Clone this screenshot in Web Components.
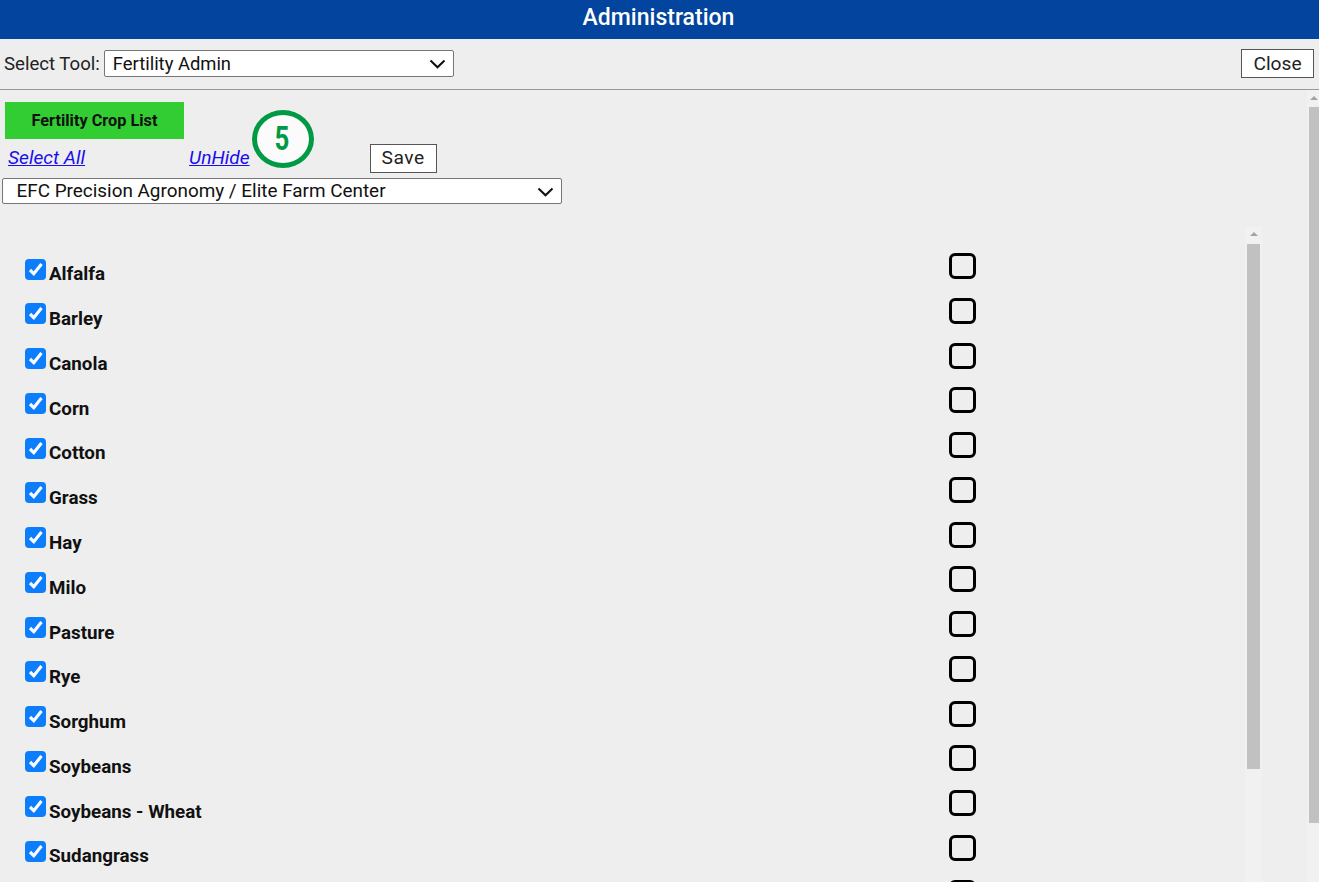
<!DOCTYPE html>
<html>
<head>
<meta charset="utf-8">
<title>Administration</title>
<style>
  html, body { margin: 0; height: 100%; overflow: hidden; }
  body { font-family: Roboto, "Liberation Sans", sans-serif; background: #eeeeee; color: #111; }
</style>
</head>
<body>
<admin-page>
  <admin-header>Administration</admin-header>
  <tool-bar>
    <span class="tool-label">Select Tool:</span>
    <select-box style="--w:350px;--h:27px;--pad:8px;--fs:18.4px;--lift:0px" value="Fertility Admin"></select-box>
    <plain-button slot="end" style="--w:73px;--h:29px">Close</plain-button>
  </tool-bar>
  <scroll-pane>
    <crop-admin></crop-admin>
  </scroll-pane>
</admin-page>

<script>
const chevron = `<svg width="17" height="10" viewBox="0 0 17 10"><path d="M1.5 1.5 8.5 8.2 15.5 1.5" fill="none" stroke="#111" stroke-width="2.1"/></svg>`;

class AdminPage extends HTMLElement {
  constructor() {
    super();
    this.attachShadow({ mode: 'open' });
  }
  connectedCallback() {
    this.shadowRoot.innerHTML = `
      <style>
        :host { display: flex; flex-direction: column; height: 882px; overflow: hidden; }
      </style>
      <slot></slot>`;
  }
}

class AdminHeader extends HTMLElement {
  constructor() {
    super();
    this.attachShadow({ mode: 'open' });
  }
  connectedCallback() {
    this.shadowRoot.innerHTML = `
      <style>
        :host {
          display: flex; flex: none; height: 39px; padding: 0 2px 4px 0; box-sizing: border-box;
          align-items: center; justify-content: center;
          background: #03449e; color: #fff;
          font-size: 23px; font-weight: 500;
        }
      </style>
      <slot></slot>`;
  }
}

class ToolBar extends HTMLElement {
  constructor() {
    super();
    this.attachShadow({ mode: 'open' });
  }
  connectedCallback() {
    this.shadowRoot.innerHTML = `
      <style>
        :host {
          display: flex; flex: none; height: 51px; box-sizing: border-box;
          align-items: center; gap: 4px;
          padding: 0 5px 2px 4px;
          border-bottom: 1px solid #999;
          font-size: 18.6px; color: #222;
        }
        .end { margin-left: auto; display: flex; }
        ::slotted(.tool-label) { margin-top: 2px; }
      </style>
      <slot></slot>
      <div class="end"><slot name="end"></slot></div>`;
  }
}

class SelectBox extends HTMLElement {
  constructor() {
    super();
    this.attachShadow({ mode: 'open' });
  }
  connectedCallback() {
    this.shadowRoot.innerHTML = `
      <style>
        :host {
          display: flex; align-items: center; justify-content: space-between; flex: none;
          box-sizing: border-box; width: var(--w); height: var(--h);
          padding: 0 7px 0 var(--pad);
          background: #fff; border: 1px solid #767676; border-radius: 2px;
          font-size: var(--fs); color: #111;
        }
        span { margin-bottom: var(--lift); }
        svg { display: block; margin-top: 1px; }
      </style>
      <span>${this.getAttribute('value')}</span>${chevron}`;
  }
}

class PlainButton extends HTMLElement {
  constructor() {
    super();
    this.attachShadow({ mode: 'open' });
  }
  connectedCallback() {
    this.shadowRoot.innerHTML = `
      <style>
        :host {
          display: flex; align-items: center; justify-content: center; flex: none;
          box-sizing: border-box; width: var(--w); height: var(--h);
          padding-bottom: var(--lift, 0);
          background: #fff; border: 1px solid #555;
          font-size: 19.2px; letter-spacing: var(--track, 0); color: #222;
        }
      </style>
      <slot></slot>`;
  }
}

class ScrollPane extends HTMLElement {
  constructor() {
    super();
    this.attachShadow({ mode: 'open' });
  }
  connectedCallback() {
    this.shadowRoot.innerHTML = `
      <style>
        :host { display: flex; flex: 1; min-height: 0; overflow: hidden; }
        .view { flex: 1; min-width: 0; }
        v-scroll { --track: 12px; --arrow-x: 3px; --thumb-top: 17px; --thumb-h: 716px; --arrow-top: 6px; }
      </style>
      <div class="view"><slot></slot></div>
      <v-scroll></v-scroll>`;
  }
}

class VScroll extends HTMLElement {
  constructor() {
    super();
    this.attachShadow({ mode: 'open' });
  }
  connectedCallback() {
    this.shadowRoot.innerHTML = `
      <style>
        :host { display: flex; flex-direction: column; flex: none; width: var(--track); background: #f1f1f1; }
        .arrow {
          width: 0; height: 0; flex: none; margin: var(--arrow-top) 0 0 var(--arrow-x);
          border: 4px solid transparent; border-top: 0; border-bottom: 4px solid #a3a3a3;
        }
        .thumb {
          flex: none; height: var(--thumb-h); background: #c1c1c1;
          margin-top: calc(var(--thumb-top) - var(--arrow-top) - 4px);
          margin-left: var(--thumb-left, 2px); margin-right: var(--thumb-right, 0);
        }
      </style>
      <div class="arrow"></div>
      <div class="thumb"></div>`;
  }
}

class CropAdmin extends HTMLElement {
  constructor() {
    super();
    this.attachShadow({ mode: 'open' });
  }
  connectedCallback() {
    const crops = ['Alfalfa', 'Barley', 'Canola', 'Corn', 'Cotton', 'Grass', 'Hay', 'Milo',
      'Pasture', 'Rye', 'Sorghum', 'Soybeans', 'Soybeans - Wheat', 'Sudangrass', ''];
    this.shadowRoot.innerHTML = `
      <style>
        :host { display: flow-root; position: relative; }
        .tab {
          display: flex; align-items: center; justify-content: center;
          width: 179px; height: 37px; margin: 12px 0 0 5px; box-sizing: border-box;
          background: #32cd32; color: #111;
          font-size: 16.3px; font-weight: 700;
        }
        .actions { display: flex; align-items: flex-start; height: 39px; margin-left: 8px; font-size: 19.2px; }
        a { color: #1a0dee; font-style: italic; text-decoration: underline; margin-top: 8px; line-height: 21px; }
        .hide { margin-left: 104px; }
        plain-button { margin: 5px 0 0 120px; --w: 67px; --h: 29px; --track: .5px; --lift: 2px; }
        select-box { margin-left: 2px; --w: 560px; --h: 26px; --pad: 13.5px; --fs: 18.9px; --lift: 2px; }
        .list { display: flex; margin-top: 23px; height: 700px; }
        .rows { width: 1245px; flex: none; padding-top: 26px; box-sizing: border-box; }
        v-scroll {
          --track: 17px; --arrow-x: 4.5px; --arrow-top: 5px; --thumb-top: 17px; --thumb-h: 525px;
          --thumb-left: 2px; --thumb-right: 2px;
        }
        .badge {
          position: absolute; left: 252px; top: 20px; width: 62px; height: 58px;
          box-sizing: border-box; border: 5px solid #009a44; border-radius: 50%;
          background: #fbfbfb; color: #009a44;
          display: flex; align-items: center; justify-content: center;
          font-size: 33px; font-weight: 700;
        }
        .badge span { display: block; transform: translate(-1.5px, -1px) scaleX(.78); }
      </style>
      <div class="tab">Fertility Crop List</div>
      <div class="actions">
        <a href="#">Select All</a>
        <a class="hide" href="#">UnHide</a>
        <plain-button>Save</plain-button>
      </div>
      <select-box value="EFC Precision Agronomy / Elite Farm Center"></select-box>
      <div class="list">
        <div class="rows">
          ${crops.map(c => `<crop-row>${c}</crop-row>`).join('')}
        </div>
        <v-scroll></v-scroll>
      </div>
      <div class="badge"><span>5</span></div>`;
  }
}

class CropRow extends HTMLElement {
  constructor() {
    super();
    this.attachShadow({ mode: 'open' });
  }
  connectedCallback() {
    this.shadowRoot.innerHTML = `
      <style>
        :host {
          display: grid; grid-template-columns: 949px 27px; height: 44.77px;
          font-size: 18.8px; font-weight: 700; color: #111;
        }
        .left { display: flex; align-items: flex-start; padding-left: 25px; }
        .on { flex: none; width: 21px; height: 21px; margin-top: 5.6px; border-radius: 4px; background: #0d7efb; }
        svg { display: block; }
        .label { margin: 11.4px 0 0 3px; line-height: 21px; }
        .off { box-sizing: border-box; width: 27px; height: 26px; border: 3px solid #000; border-radius: 6px; }
      </style>
      <div class="left">
        <span class="on"><svg width="21" height="21" viewBox="0 0 21 21"><path d="M5 11 8.8 14.6 16.5 5" fill="none" stroke="#fff" stroke-width="3.1"/></svg></span>
        <span class="label"><slot></slot></span>
      </div>
      <div class="off"></div>`;
  }
}

customElements.define('admin-page', AdminPage);
customElements.define('admin-header', AdminHeader);
customElements.define('tool-bar', ToolBar);
customElements.define('select-box', SelectBox);
customElements.define('plain-button', PlainButton);
customElements.define('v-scroll', VScroll);
customElements.define('scroll-pane', ScrollPane);
customElements.define('crop-admin', CropAdmin);
customElements.define('crop-row', CropRow);
</script>
</body>
</html>
